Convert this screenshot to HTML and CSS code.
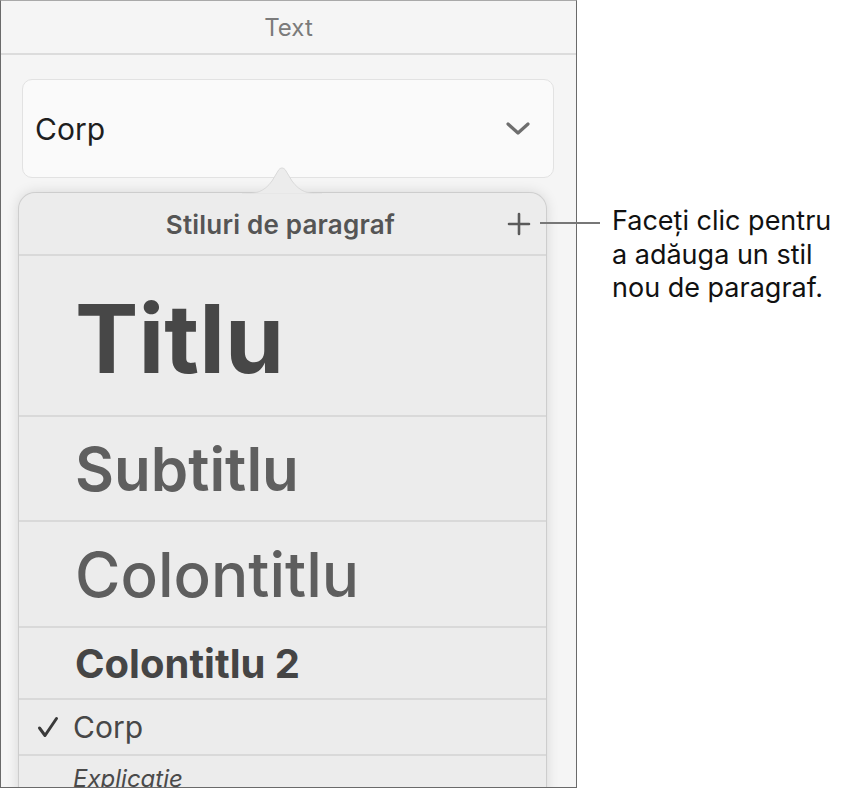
FILE: index.html
```html
<!DOCTYPE html>
<html lang="ro">
<head>
<meta charset="utf-8">
<title>Stiluri de paragraf</title>
<link rel="stylesheet" href="styles.css">
</head>
<body>
<div class="page">
  <div class="panel">
    <div class="panel-header">Text</div>
    <div class="panel-body">
      <div class="dropdown">
        <span class="dropdown-label">Corp</span>
        <svg class="chevron" width="26" height="16" viewBox="0 0 26 16"><path d="M3 3 L13 12 L23 3" fill="none" stroke="#6e6e6e" stroke-width="3.2" stroke-linecap="round" stroke-linejoin="round"/></svg>
      </div>
      <div class="popover">
        <svg class="popover-arrow" width="80" height="30" viewBox="0 0 80 30"><path d="M0 29 C14 29 22 27 30 16 L36 6 C38 2 42 2 44 6 L50 16 C58 27 66 29 80 29 Z" fill="#ececec" stroke="#dadada" stroke-width="1"/><rect x="0" y="28.5" width="80" height="2" fill="#ececec"/></svg>
        <div class="popover-header">
          <span class="popover-title">Stiluri de paragraf</span>
          <svg class="plus" width="24" height="24" viewBox="0 0 24 24"><path d="M12 2 V22 M2 12 H22" stroke="#5a5a5a" stroke-width="2.6" stroke-linecap="round"/></svg>
        </div>
        <div class="row row-titlu"><span class="t-titlu">Titlu</span></div>
        <div class="row row-subtitlu"><span class="t-subtitlu">Subtitlu</span></div>
        <div class="row row-colontitlu"><span class="t-colontitlu">Colontitlu</span></div>
        <div class="row row-colontitlu2"><span class="t-colontitlu2">Colontitlu 2</span></div>
        <div class="row row-corp"><svg class="check" width="22" height="22" viewBox="0 0 22 22"><path d="M2.5 12 L8 19.5 L19.5 2.5" fill="none" stroke="#3a3a3a" stroke-width="3" stroke-linecap="round" stroke-linejoin="round"/></svg><span class="t-corp">Corp</span></div>
        <div class="row row-explicatie"><span class="t-explicatie">Explicatie</span></div>
      </div>
    </div>
  </div>
  <div class="callout">
    <div class="leader"></div>
    <p class="callout-text">Faceți clic pentru<br>a adăuga un stil<br>nou de paragraf.</p>
  </div>
</div>
</body>
</html>
```

FILE: styles.css
```css
html, body {
  margin: 0;
  padding: 0;
  background: #ffffff;
}
body {
  font-family: Inter, Roboto, "Liberation Sans", sans-serif;
}
.page {
  display: flex;
  width: 844px;
  height: 788px;
  overflow: hidden;
  position: relative;
}
.panel {
  width: 575px;
  height: 786px;
  border-top: 1px solid #a9a9a9;
  border-left: 1px solid #6a6a6a;
  border-right: 1px solid #6a6a6a;
  border-bottom: 1px solid #6a6a6a;
  background: #f5f5f5;
  overflow: hidden;
  display: flex;
  flex-direction: column;
  flex-shrink: 0;
}
.panel > * {
  flex-shrink: 0;
}
.panel-header {
  height: 52px;
  border-bottom: 2px solid #dcdcdc;
  display: flex;
  align-items: center;
  justify-content: center;
  font-size: 24px;
  color: #7b7b7b;
}
.panel-body {
  padding: 24px 0 0 18px;
  display: flex;
  flex-direction: column;
}
.panel-body > * {
  flex-shrink: 0;
}
.dropdown {
  margin-left: 3px;
  border: 1px solid #e2e2e2;
  border-radius: 10px;
  background: #fafafa;
  display: flex;
  align-items: center;
  justify-content: space-between;
  padding: 0 22px 0 12px;
  box-sizing: border-box;
  width: 532px;
  height: 99px;
}
.dropdown-label {
  font-size: 30px;
  color: #1e1e1e;
}
.chevron {
  display: block;
}
.popover {
  position: relative;
  margin-top: 15px;
  width: 527px;
  height: 620px;
  background: #ececec;
  border-radius: 16px;
  box-shadow: 0 0 14px rgba(0,0,0,0.14), 0 0 0 1px #dcdcdc;
  display: flex;
  flex-direction: column;
}
.popover > * {
  flex-shrink: 0;
}
.popover-arrow {
  position: absolute;
  left: 223px;
  top: -28px;
}
.popover-header {
  height: 61px;
  border-bottom: 2px solid #d9d9d9;
  display: flex;
  align-items: center;
  justify-content: center;
  position: relative;
}
.popover-title {
  font-size: 26px;
  font-weight: 600;
  color: #555555;
  margin-top: 2px;
  margin-right: 4px;
  letter-spacing: 0.2px;
}
.plus {
  position: absolute;
  right: 15px;
  top: 19px;
}
.row {
  border-bottom: 2px solid #d9d9d9;
  display: flex;
  align-items: center;
  padding-left: 56px;
  box-sizing: border-box;
}
.row-titlu { height: 161px; }
.row-subtitlu { height: 105px; }
.row-colontitlu { height: 106px; }
.row-colontitlu2 { height: 72px; }
.row-corp { height: 56px; padding-left: 18px; }
.row-explicatie { height: 60px; border-bottom: none; align-items: flex-start; padding-top: 8px; padding-left: 54px; }
.t-titlu {
  font-size: 95px;
  font-weight: 700;
  color: #474747;
  margin-top: 6px;
}
.t-subtitlu {
  font-size: 60px;
  font-weight: 600;
  color: #5f5f5f;
}
.t-colontitlu {
  font-size: 62px;
  font-weight: 500;
  color: #5e5e5e;
}
.t-colontitlu2 {
  font-size: 40px;
  font-weight: 700;
  color: #454545;
}
.check {
  display: block;
  margin-right: 14px;
}
.t-corp {
  font-size: 30px;
  color: #474747;
}
.t-explicatie {
  font-size: 24px;
  font-style: italic;
  color: #4a4a4a;
}
.callout {
  flex: 1;
  padding-top: 204px;
  padding-left: 35px;
}
.leader {
  position: absolute;
  left: 540px;
  top: 222px;
  width: 60px;
  height: 2px;
  background: #777777;
}
.callout-text {
  margin: 0;
  font-size: 27px;
  line-height: 33.5px;
  color: #111111;
  white-space: nowrap;
}
```
